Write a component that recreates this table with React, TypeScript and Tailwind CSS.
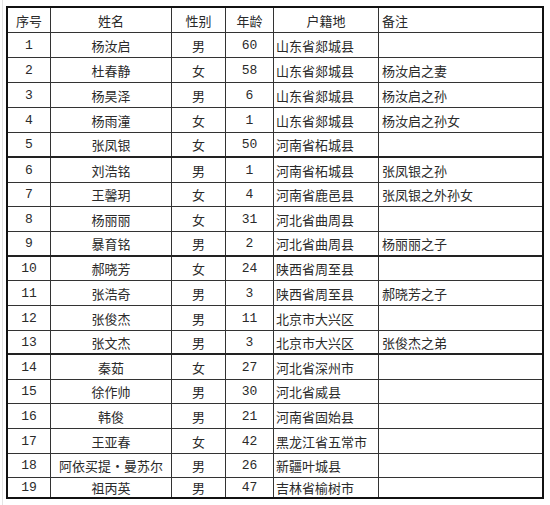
import React from "react";

type Row = [string, string, string, string, string, string];

const rows: Row[] = [
  ["1", "杨汝启", "男", "60", "山东省郯城县", ""],
  ["2", "杜春静", "女", "58", "山东省郯城县", "杨汝启之妻"],
  ["3", "杨昊泽", "男", "6", "山东省郯城县", "杨汝启之孙"],
  ["4", "杨雨潼", "女", "1", "山东省郯城县", "杨汝启之孙女"],
  ["5", "张凤银", "女", "50", "河南省柘城县", ""],
  ["6", "刘浩铭", "男", "1", "河南省柘城县", "张凤银之孙"],
  ["7", "王馨玥", "女", "4", "河南省鹿邑县", "张凤银之外孙女"],
  ["8", "杨丽丽", "女", "31", "河北省曲周县", ""],
  ["9", "暴育铭", "男", "2", "河北省曲周县", "杨丽丽之子"],
  ["10", "郝晓芳", "女", "24", "陕西省周至县", ""],
  ["11", "张浩奇", "男", "3", "陕西省周至县", "郝晓芳之子"],
  ["12", "张俊杰", "男", "11", "北京市大兴区", ""],
  ["13", "张文杰", "男", "3", "北京市大兴区", "张俊杰之弟"],
  ["14", "秦茹", "女", "27", "河北省深州市", ""],
  ["15", "徐作帅", "男", "30", "河北省威县", ""],
  ["16", "韩俊", "男", "21", "河南省固始县", ""],
  ["17", "王亚春", "女", "42", "黑龙江省五常市", ""],
  ["18", "阿依买提·曼苏尔", "男", "26", "新疆叶城县", ""],
  ["19", "祖丙英", "男", "47", "吉林省榆树市", ""],
];

const heightClass = [
  "h-[25px]", "h-[25px]", "h-[25px]", "h-[25px]", "h-[25px]", "h-[25px]", "h-[25px]",
  "h-[24px]", "h-[25px]", "h-[25px]", "h-[24px]", "h-[25px]", "h-[25px]", "h-[24px]",
  "h-[25px]", "h-[24px]", "h-[25px]", "h-[25px]", "h-[24px]", "h-[19px]",
];
const thick = new Set([5, 9, 13]);

export default function App() {
  const header: Row = ["序号", "姓名", "性别", "年龄", "户籍地", "备注"];
  const all = [header, ...rows];
  return (
    <div className="w-[550px] h-[505px] bg-white overflow-hidden pl-[2px] font-['Noto_Sans_CJK_SC','Noto_Sans',sans-serif]">
      <div className="h-full border-l border-[#e4e4e4] pl-[3px] pt-[6px]">
        <div className="w-[538px] border-2 border-[#111] text-[13px] leading-none text-[#2a2a2a]">
          {all.map((r, i) => {
            const last = i === all.length - 1;
            const isThick = thick.has(i);
            const rowBorder = last ? "" : isThick ? "border-b-2 border-[#222]" : "border-b border-[#333]";
            return (
              <div key={i} className={`grid grid-cols-[43px_121px_54px_48px_105px_163px] ${heightClass[i]} ${rowBorder}`}>
                {r.map((c, j) => {
                  const isNum = i > 0 && (j === 0 || j === 3);
                  const align =
                    j === 5
                      ? "justify-start pl-[3px]"
                      : j === 4 && i > 0
                      ? "justify-start pl-[2px]"
                      : "justify-center";
                  const sep = j < 5 ? "border-r border-[#333]" : "";
                  const fontCls = isNum ? "font-['Liberation_Mono','Noto_Sans_CJK_SC',monospace]" : "";
                  return (
                    <div key={j} className={`flex items-center overflow-hidden whitespace-nowrap ${sep} ${align} ${fontCls}`}>
                      {c}
                    </div>
                  );
                })}
              </div>
            );
          })}
        </div>
      </div>
    </div>
  );
}
